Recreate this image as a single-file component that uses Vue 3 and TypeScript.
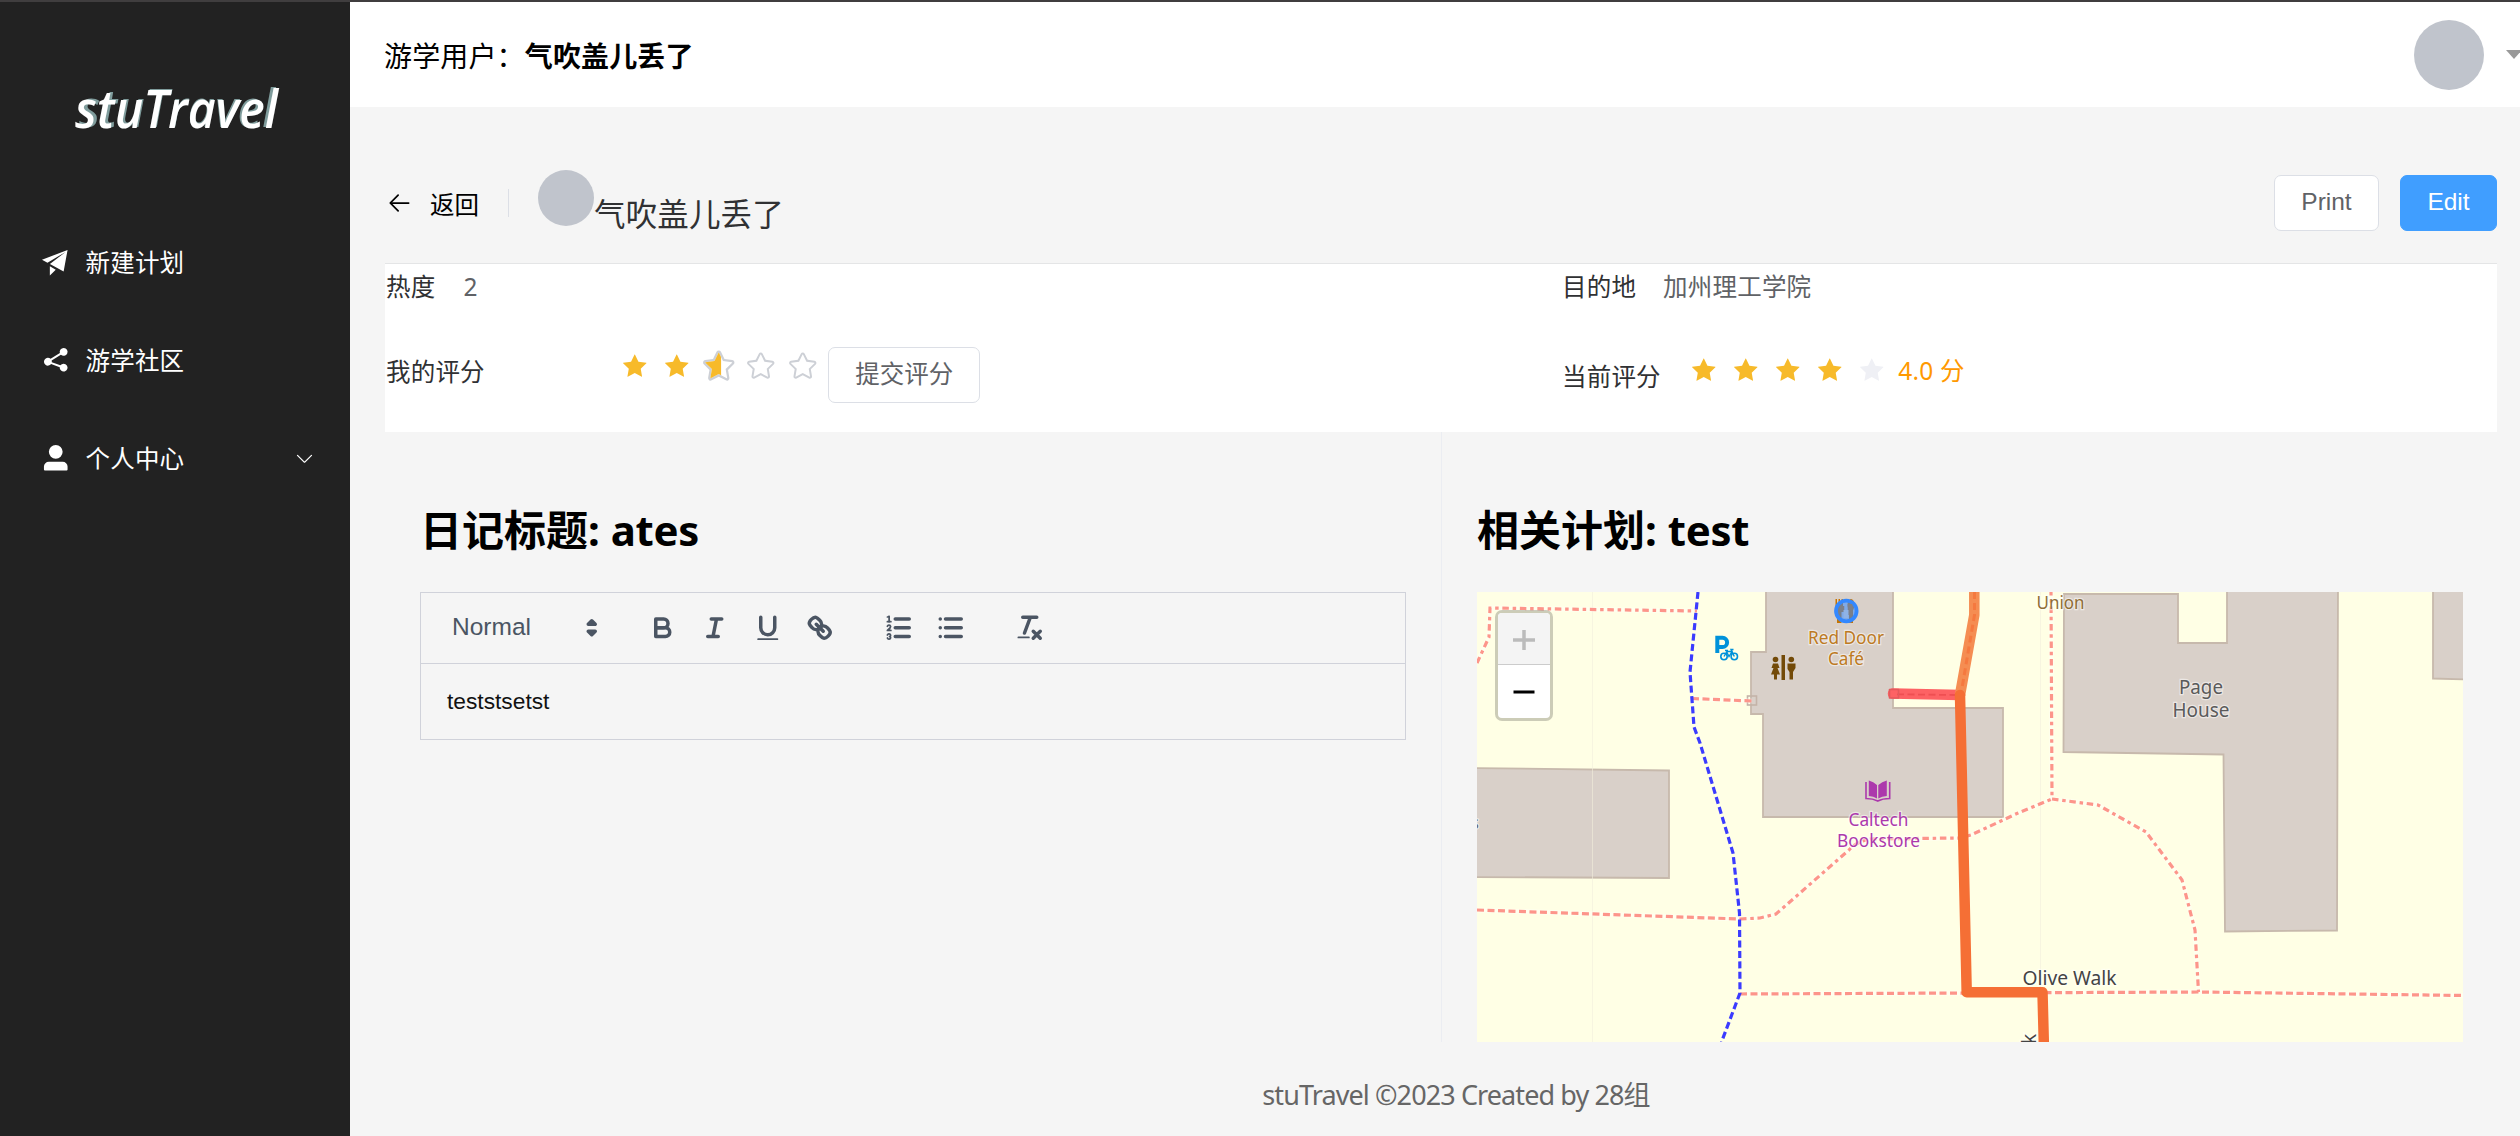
<script setup lang="ts">
interface MenuItem {
  label: string
  icon: string
  expandable?: boolean
}

const userName = '气吹盖儿丢了'

const menu: MenuItem[] = [
  {
    label: '新建计划',
    icon: 'm64 448 832-320-128 704-446.08-243.328L832 192 242.816 545.472 64 448zm256 512V657.024L512 768 320 960z',
  },
  {
    label: '游学社区',
    icon: 'm679.872 348.8-301.76 188.608a127.808 127.808 0 0 1 5.12 52.16l279.936 104.96a128 128 0 1 1-22.464 59.904l-279.872-104.96a128 128 0 1 1-16.64-166.272l301.696-188.608a128 128 0 1 1 33.92 54.272z',
  },
  {
    label: '个人中心',
    icon: 'M288 320a224 224 0 1 0 448 0 224 224 0 1 0-448 0zm544 608H160a32 32 0 0 1-32-32v-96a160 160 0 0 1 160-160h448a160 160 0 0 1 160 160v96a32 32 0 0 1-32 32z',
    expandable: true,
  },
]

const starFilled =
  'M283.84 867.84 512 747.776l228.16 119.936a6.4 6.4 0 0 0 9.28-6.72l-43.52-254.08 184.512-179.904a6.4 6.4 0 0 0-3.52-10.88l-255.104-37.12L517.76 147.904a6.4 6.4 0 0 0-11.52 0L392.192 379.072l-255.104 37.12a6.4 6.4 0 0 0-3.52 10.88L318.08 606.976l-43.584 254.08a6.4 6.4 0 0 0 9.28 6.72z'
const starOutline =
  'm512 747.84 228.16 119.936a6.4 6.4 0 0 0 9.28-6.72l-43.52-254.08 184.512-179.904a6.4 6.4 0 0 0-3.52-10.88l-255.104-37.12L517.76 147.904a6.4 6.4 0 0 0-11.52 0L392.192 379.072l-255.104 37.12a6.4 6.4 0 0 0-3.52 10.88L318.08 606.976l-43.584 254.08a6.4 6.4 0 0 0 9.28 6.72L512 747.84zM313.6 924.48a70.4 70.4 0 0 1-102.144-74.24l37.888-220.928L88.96 472.96A70.4 70.4 0 0 1 128 352.896l221.76-32.256 99.2-200.96a70.4 70.4 0 0 1 126.208 0l99.2 200.96 221.824 32.256a70.4 70.4 0 0 1 39.04 120.064L774.72 629.376l37.888 220.992a70.4 70.4 0 0 1-102.144 74.24L512 820.096l-198.4 104.32z'

type StarKind = 'full' | 'half' | 'empty'
const myStars: StarKind[] = ['full', 'full', 'half', 'empty', 'empty']
const currentScore = 4
</script>

<template>
  <div class="page">
    <aside class="sidebar">
      <div class="logo">
        <svg width="230" height="70" viewBox="0 0 230 70">
          <text x="9" y="51.5" class="logo-shade" textLength="196" lengthAdjust="spacingAndGlyphs">stuTravel</text>
          <text x="5" y="53" class="logo-text" textLength="203" lengthAdjust="spacingAndGlyphs">stuTravel</text>
        </svg>
      </div>
      <nav class="menu">
        <div v-for="item in menu" :key="item.label" class="menu-item">
          <svg class="menu-icon" viewBox="0 0 1024 1024"><path fill="#fff" :d="item.icon" /></svg>
          <span class="menu-label">{{ item.label }}</span>
          <svg v-if="item.expandable" class="menu-arrow" viewBox="0 0 1024 1024">
            <path fill="#fff" d="M831.872 340.864 512 652.672 192.128 340.864a30.592 30.592 0 0 0-42.752 0 29.12 29.12 0 0 0 0 41.6L489.664 714.24a32 32 0 0 0 44.672 0l340.288-331.712a29.12 29.12 0 0 0 0-41.728 30.592 30.592 0 0 0-42.752 0z" />
          </svg>
        </div>
      </nav>
    </aside>

    <div class="main">
      <header class="topbar">
        <div class="greeting">游学用户：<b>{{ userName }}</b></div>
        <div class="account">
          <span class="avatar big"></span>
          <span class="caret"></span>
        </div>
      </header>

      <section class="content">
        <div class="page-header">
          <svg class="back-icon" viewBox="0 0 1024 1024">
            <path d="M224 480h640a32 32 0 1 1 0 64H237.248a32 32 0 0 1 0-64z" />
            <path d="m237.248 512 265.408 265.344a32 32 0 0 1-45.312 45.312l-288-288a32 32 0 0 1 0-45.312l288-288a32 32 0 1 1 45.312 45.312L237.248 512z" />
          </svg>
          <span class="back-text">返回</span>
          <span class="sep"></span>
          <span class="avatar small"></span>
          <span class="owner">{{ userName }}</span>
          <div class="actions">
            <button class="btn print">Print</button>
            <button class="btn primary">Edit</button>
          </div>
        </div>

        <div class="info">
          <div class="info-row first">
            <div class="cell"><span class="label">热度</span><span class="value">2</span></div>
            <div class="cell"><span class="label">目的地</span><span class="value place">加州理工学院</span></div>
          </div>
          <div class="info-row second">
            <div class="cell">
              <span class="label mine">我的评分</span>
              <div class="stars my-stars">
                <svg v-for="(s, i) in myStars" :key="i" class="star" :class="s" viewBox="0 0 1024 1024">
                  <path v-if="s !== 'full'" fill="#cdd0d6" :d="starOutline" />
                  <path v-if="s === 'full'" fill="#f7ba2a" :d="starFilled" />
                  <svg v-if="s === 'half'" x="0" y="0" width="578" height="1024" viewBox="0 0 578 1024">
                    <path fill="#f7ba2a" :d="starFilled" />
                  </svg>
                </svg>
              </div>
              <button class="btn submit">提交评分</button>
            </div>
            <div class="cell">
              <span class="label current">当前评分</span>
              <div class="stars cur-stars">
                <svg v-for="n in 5" :key="n" class="star" viewBox="0 0 1024 1024">
                  <path :fill="n <= currentScore ? '#f7ba2a' : '#eff0f5'" :d="starFilled" />
                </svg>
              </div>
              <span class="score">{{ currentScore.toFixed(1) }} 分</span>
            </div>
          </div>
        </div>

        <div class="columns">
          <div class="col left">
            <h1>日记标题: <span class="title-name">ates</span></h1>
            <div class="editor">
              <div class="toolbar">
                <span class="picker">Normal</span>
                <svg class="tool updown" viewBox="0 0 18 18">
                  <polygon class="fs" points="7 11 9 13 11 11 7 11" /><polygon class="fs" points="7 7 9 5 11 7 7 7" />
                </svg>
                <svg class="tool" viewBox="0 0 18 18">
                  <path class="s" d="M5,4H9.5A2.5,2.5,0,0,1,12,6.5v0A2.5,2.5,0,0,1,9.5,9H5A0,0,0,0,1,5,9V4A0,0,0,0,1,5,4Z" />
                  <path class="s" d="M5,9h5.5A2.5,2.5,0,0,1,13,11.5v0A2.5,2.5,0,0,1,10.5,14H5a0,0,0,0,1,0,0V9A0,0,0,0,1,5,9Z" />
                </svg>
                <svg class="tool" viewBox="0 0 18 18">
                  <path class="s" d="M7,4H13M5,14H11M8,14L10,4" />
                </svg>
                <svg class="tool" viewBox="0 0 18 18">
                  <path class="s" d="M5,3V9a4.012,4.012,0,0,0,4,4H9a4.012,4.012,0,0,0,4-4V3" />
                  <rect class="f" x="3" y="15" width="12" height="1" rx=".5" />
                </svg>
                <svg class="tool" viewBox="0 0 18 18">
                  <path class="s" d="M7,7L11,11" />
                  <path class="s" d="M8.9,4.577a3.476,3.476,0,0,1,.36,4.679A3.476,3.476,0,0,1,4.577,8.9C3.185,7.5,2.035,6.4,4.217,4.217S7.5,3.185,8.9,4.577Z" />
                  <path class="s" d="M13.423,9.1a3.476,3.476,0,0,0-4.679-.36,3.476,3.476,0,0,0,.36,4.679c1.392,1.392,2.5,2.542,4.679.36S14.815,10.5,13.423,9.1Z" />
                </svg>
                <svg class="tool group" viewBox="0 0 18 18">
                  <path class="s" d="M7,4H15M7,9H15M7,14H15" />
                  <path class="s thin" d="M2.5,5.5H4.5" />
                  <path class="f" d="M3.5,6A0.5,0.5,0,0,1,3,5.5V3.085l-0.276.138A0.5,0.5,0,0,1,2.053,3c-0.124-.247-0.023-0.324.224-0.447l1-.5A0.5,0.5,0,0,1,4,2.5v3A0.5,0.5,0,0,1,3.5,6Z" />
                  <path class="s thin" d="M4.5,10.5h-2c0-.234,1.85-1.076,1.85-2.234A0.959,0.959,0,0,0,2.5,8.156" />
                  <path class="s thin" d="M2.5,14.846a0.959,0.959,0,0,0,1.85-.109A0.7,0.7,0,0,0,3.75,14a0.688,0.688,0,0,0,.6-0.736,0.959,0.959,0,0,0-1.85-.109" />
                </svg>
                <svg class="tool" viewBox="0 0 18 18">
                  <path class="s" d="M6,4H15M6,9H15M6,14H15M3,4H3.01M3,9H3.01M3,14H3.01" />
                </svg>
                <svg class="tool group" viewBox="0 0 18 18">
                  <path class="s" d="M5,3H13M6,12L9.35,3M11,11L15,15M15,11L11,15" />
                  <rect class="f" x="2" y="14" width="7" height="1" rx=".5" />
                </svg>
              </div>
              <div class="editor-body">teststsetst</div>
            </div>
          </div>

          <div class="col right">
            <h1>相关计划: <span class="title-name">test</span></h1>
            <div class="map">
              <svg width="986" height="450" viewBox="1477 592 986 450">
                <rect x="1477" y="592" width="986" height="450" fill="#ffffe5" />
                <g class="building">
                  <path d="M1766 580V652H1751V714H1763V817H2003V708H1893V580Z" />
                  <path d="M1470 768L1669 770.5V878L1470 877Z" />
                  <path d="M2064 594H2178V643H2227V580H2338L2337 930.5L2225 931.5L2223.5 754.5L2063.5 752Z" />
                  <path d="M2433 580V678.5L2470 679.5V580Z" />
                </g>
                <path d="M1592.5 592V1042M2040.5 592V1042" stroke="#f1eedc" stroke-opacity=".6" fill="none" />
                <rect x="1747.5" y="696" width="9" height="9" fill="none" stroke="#c4b3a8" stroke-width="1.6" />

                <g class="casing">
                  <path d="M1477 663L1489 637L1490 608L1697 611M2051 592L2052 799L2098 805L2146 832L2182 880L2195 930L2198.500 992" />
                  <path d="M1740 919L1760 918L1776 914L1849 850Q1856 842 1870 839L1960 838L1971 835L2018 813L2052 799" />
                  <path d="M1477 910L1740 919M1740 994L2200 992L2463 995.500M1692 698.500L1752 701" />
                </g>
                <g class="foot mixed">
                  <path d="M1477 663L1489 637L1490 608L1697 611" />
                  <path d="M2051 592L2052 799" stroke-dashoffset="3" />
                  <path d="M2052 799L2098 805L2146 832L2182 880L2195 930L2198.500 992" />
                  <path d="M1740 919L1760 918L1776 914L1849 850Q1856 842 1870 839L1960 838L1971 835L2018 813L2052 799" />
                </g>
                <g class="foot even">
                  <path d="M1477 910L1740 919" />
                  <path d="M1740 994L2200 992L2463 995.500" />
                  <path d="M1692 698.500L1752 701" />
                </g>
                <path class="cycle" d="M1698 592L1690 672L1694 727L1700 743L1733 853L1739.500 913L1740 993L1721.500 1042" />

                <!-- parking for bicycles -->
                <g stroke="#0092da" fill="none">
                  <path d="M1717.300 653V637.800H1722.500A4.600 4.600 0 0 1 1722.500 647H1717.300" stroke-width="4" />
                  <circle cx="1724" cy="656.500" r="3.200" stroke-width="1.600" />
                  <circle cx="1734.300" cy="656.500" r="3.200" stroke-width="1.600" />
                  <path d="M1724 656.500L1727 651.500H1732L1729 656.500L1726.500 651.500M1734.300 656.500L1731 649.500H1733.500M1725 650.500H1728" stroke-width="1.400" />
                </g>
                <!-- toilets -->
                <g fill="#734a08">
                  <rect x="1781.500" y="655" width="3.500" height="25" />
                  <circle cx="1775.500" cy="659.500" r="2.800" />
                  <path d="M1773 663.500H1778L1779.500 668H1777.500L1780 674.500H1777V679.500H1774V674.500H1771L1773.500 668H1771.500Z" />
                  <circle cx="1791.300" cy="659.500" r="2.800" />
                  <path d="M1787.500 663.500H1795.500V668L1793 672V679.500H1789.500V672L1787.500 669Z" />
                </g>
                <!-- café -->
                <g fill="#c77400">
                  <path d="M1835.500 599H1837V604H1838.500V599H1840V604H1841.500V599H1843V608L1841.500 611V623H1837V611L1835.500 608Z" />
                  <ellipse cx="1851" cy="605" rx="3.500" ry="6" />
                  <rect x="1849" y="609" width="4" height="14" />
                </g>
                <circle cx="1846.300" cy="611" r="10.300" fill="#3388ff" fill-opacity=".55" stroke="#3388ff" stroke-width="3.800" />
                <path d="M1842 606V612M1850 604V615" stroke="#7b808a" stroke-width="4.500" />
                <path d="M1846 610V618" stroke="#8fb3e6" stroke-width="5" />
                <!-- bookshop -->
                <g fill="#ac39ac">
                  <path d="M1868.800 780.500Q1873.500 781.500 1877 785V798.500Q1873.500 796 1868.800 796ZM1886.800 780.500Q1882 781.500 1878.300 785V798.500Q1882 796 1886.800 796Z" />
                  <path d="M1866 782V798.500Q1873 798.500 1877.800 801Q1882.500 798.500 1889.700 798.500V782" fill="none" stroke="#ac39ac" stroke-width="1.600" />
                </g>

                <g class="label-text" text-anchor="middle">
                  <g fill="#bd7a22">
                    <text x="1846" y="643.500" textLength="76" lengthAdjust="spacingAndGlyphs">Red Door</text>
                    <text x="1846" y="664.500" textLength="36" lengthAdjust="spacingAndGlyphs">Café</text>
                  </g>
                  <text x="2060.500" y="609" fill="#8f6d35" textLength="48" lengthAdjust="spacingAndGlyphs">Union</text>
                  <g fill="#ac39ac">
                    <text x="1878.500" y="825.500" textLength="60" lengthAdjust="spacingAndGlyphs">Caltech</text>
                    <text x="1878.500" y="846.500" textLength="83" lengthAdjust="spacingAndGlyphs">Bookstore</text>
                  </g>
                  <g fill="#5a5a5a" class="bigger">
                    <text x="2201" y="693.500" textLength="44" lengthAdjust="spacingAndGlyphs">Page</text>
                    <text x="2201" y="716.500" textLength="57" lengthAdjust="spacingAndGlyphs">House</text>
                  </g>
                  <text class="bigger" x="2069.500" y="985" fill="#444" textLength="94" lengthAdjust="spacingAndGlyphs">Olive Walk</text>
                </g>
                <text class="label-text bigger" fill="#444" transform="translate(2036 1044) rotate(-90)">k</text>
                <text class="label-text" fill="#666" x="1470.500" y="829">s</text>

                <g fill="none" stroke-width="10.500" stroke-linejoin="round">
                  <path d="M1893 693.500L1960 695" stroke="#fd6264" stroke-linecap="round" />
                  <path d="M1897 694.300L1955 695" stroke="#ef4f52" stroke-width="1.800" stroke-dasharray="7 3.500" />
                  <rect x="1889.500" y="689.500" width="9" height="8.500" stroke="#e35a5c" stroke-width="1.600" />
                  <path d="M1974.300 586V615L1960 695" stroke="#f58d52" />
                  <path d="M1974.500 592V615L1962 688" stroke="#f5793f" stroke-width="3" stroke-dasharray="7 4" />
                  <path d="M1960 695L1966.700 992.300H2042.500L2044 1050" stroke="#f56f35" stroke-linecap="round" />
                </g>
              </svg>
              <div class="zoom">
                <div class="zoom-cell off">
                  <svg width="22" height="22" viewBox="0 0 22 22"><path d="M0 11H22M11 1V21" stroke="#bbb" stroke-width="3.500" /></svg>
                </div>
                <div class="zoom-cell">
                  <svg width="22" height="22" viewBox="0 0 22 22"><path d="M.5 11H21.500" stroke="#000" stroke-width="3.200" /></svg>
                </div>
              </div>
            </div>
          </div>
        </div>
      </section>

      <footer class="footer"><span>stuTravel ©2023 Created by 28组</span></footer>
    </div>
  </div>
</template>

<style>
body {
  overflow: hidden;
}
</style>

<style scoped>
.page {
  box-sizing: border-box;
  display: flex;
  width: 2520px;
  height: 1136px;
  border-top: 2px solid #403e3f;
  background: #f5f5f5;
  font-family: 'Noto Sans', 'Noto Sans CJK SC', sans-serif;
  font-size: 24.5px;
  line-height: 36px;
  white-space: nowrap;
  overflow: hidden;
}
svg {
  display: block;
  flex: none;
}
.sidebar {
  width: 350px;
  flex: none;
  background: #222;
}
.logo {
  padding: 73px 0 0 70px;
  height: 138px;
}
.logo svg {
  overflow: visible;
}
.logo text {
  font-family: 'Open Sans', 'Noto Sans', sans-serif;
  font-style: italic;
  font-weight: 600;
  font-size: 52px;
}
.logo-shade {
  fill: #7f9c9c;
}
.logo-text {
  fill: #fff;
}
.menu-item {
  display: flex;
  align-items: center;
  height: 98px;
  padding: 0 35px 0 40px;
  color: #fff;
}
.menu-icon {
  width: 31.5px;
  height: 31.5px;
}
.menu-label {
  margin-left: 14px;
  padding-top: 1px;
  letter-spacing: 0.2px;
}
.menu-arrow {
  width: 21px;
  height: 21px;
  margin-left: auto;
}
.main {
  width: 2170px;
  display: flex;
  flex-direction: column;
}
.topbar {
  height: 105px;
  display: flex;
  align-items: center;
  justify-content: space-between;
  background: #fff;
  padding-left: 34px;
}
.greeting {
  font-size: 28px;
  letter-spacing: 0.15px;
  color: #000;
  padding-top: 3px;
}
.account {
  display: flex;
  align-items: center;
}
.avatar {
  flex: none;
  border-radius: 50%;
  background: #c0c4cc;
}
.big {
  width: 70px;
  height: 70px;
}
.caret {
  margin-left: 22px;
  margin-right: -2px;
  border: 8px solid transparent;
  border-top: 9px solid #999;
  border-bottom: 0;
}
.content {
  padding: 63px 23px 0 35px;
}
.page-header {
  display: flex;
  align-items: flex-start;
  height: 93px;
}
.back-icon {
  width: 28px;
  height: 28px;
  margin-top: 19px;
}
.back-text {
  width: 49px;
  color: #000;
  margin: 17px 0 0 17px;
}
.sep {
  width: 1px;
  height: 28px;
  margin: 19px 29px 0 29px;
  background: #dcdfe6;
}
.small {
  width: 56px;
  height: 56px;
}
.owner {
  font-size: 31.5px;
  letter-spacing: 0.15px;
  line-height: 40px;
  color: #303133;
  margin-top: 24px;
}
.actions {
  display: flex;
  gap: 21px;
  margin: 5px 0 0 auto;
}
.btn {
  box-sizing: border-box;
  height: 56px;
  padding: 0 0 2px;
  border: 1px solid #dcdfe6;
  border-radius: 7px;
  background: #fff;
  color: #606266;
  font: 24.5px/50px 'Liberation Sans', Arial, 'Noto Sans CJK SC', sans-serif;
}
.print {
  width: 105px;
}
.primary {
  width: 97px;
  border-color: #409eff;
  background: #409eff;
  color: #fff;
}
.info {
  box-sizing: border-box;
  height: 169px;
  border-top: 1px solid #e4e5e6;
  background: #fff;
}
.info-row {
  display: grid;
  grid-template-columns: 1176px 1fr;
}
.cell {
  display: flex;
  align-items: flex-start;
  padding-left: 1px;
}
.first {
  padding-top: 5px;
  height: 78px;
}
.label {
  color: #303133;
  letter-spacing: 0.2px;
}
.value {
  color: #606266;
  margin-left: 28px;
}
.place {
  margin-left: 27px;
  letter-spacing: 0.2px;
}
.mine {
  margin-top: 7px;
}
.current {
  margin-top: 12px;
}
.stars {
  display: flex;
  gap: 10.5px;
}
.star {
  width: 31.5px;
  height: 31.5px;
}
.half {
  transform: scale(1.15);
}
.my-stars {
  margin: 3px 0 0 134px;
}
.submit {
  width: 152px;
  margin-left: 10px;
  padding-bottom: 0;
}
.cur-stars {
  margin: 7px 0 0 27px;
}
.score {
  margin: 6px 0 0 11px;
  letter-spacing: 0.2px;
  color: #f90;
}
.columns {
  display: flex;
  height: 610px;
}
.col {
  box-sizing: border-box;
  padding: 67px 34px 0 35px;
}
.left {
  width: 1057px;
  border-right: 1px solid #ebedf2;
}
.right {
  width: 1055px;
}
h1 {
  margin: 0;
  height: 93px;
  font-size: 42px;
  line-height: 62px;
  font-weight: 700;
  color: #000;
}
.title-name {
  letter-spacing: -0.3px;
}
.editor {
  box-sizing: border-box;
  width: 986px;
  height: 148px;
  border: 1px solid #d0d2da;
}
.toolbar {
  box-sizing: border-box;
  display: flex;
  align-items: center;
  height: 71px;
  padding-left: 31px;
  border-bottom: 1px solid #d0d2da;
}
.picker {
  width: 124px;
  padding-bottom: 2px;
  font-family: 'Liberation Sans', Arial, sans-serif;
  color: #4b5563;
}
.tool {
  width: 31.5px;
  height: 31.5px;
  margin-right: 21px;
}
.updown {
  margin-right: 39px;
}
.tool.group {
  margin-left: 26px;
}
.s,
.fs {
  fill: none;
  stroke: #4b5563;
  stroke-width: 2;
  stroke-linecap: round;
  stroke-linejoin: round;
}
.fs {
  fill: #4b5563;
}
.f {
  fill: #4b5563;
}
.thin {
  stroke-width: 1;
}
.editor-body {
  padding: 19px 26px;
  font-family: 'Liberation Sans', Arial, sans-serif;
  font-size: 22.75px;
  color: #111;
}
.map {
  position: relative;
  width: 986px;
  height: 450px;
  overflow: hidden;
}
.building path {
  fill: #d9d0c9;
  stroke: #c7b9ac;
  stroke-width: 1.8;
}
.casing path {
  fill: none;
  stroke: #fff;
  stroke-opacity: 0.35;
  stroke-width: 5;
}
.foot path {
  fill: none;
  stroke: #fd958a;
  stroke-width: 3.2;
}
.mixed path {
  stroke-dasharray: 6.500 3.800 3.500 3.700;
}
.even path {
  stroke-dasharray: 7 3.500;
}
.cycle {
  fill: none;
  stroke: #3b3bff;
  stroke-width: 3.2;
  stroke-dasharray: 7 3.450;
}
.label-text {
  font-size: 17.500px;
  paint-order: stroke;
  stroke: #fff;
  stroke-opacity: 0.5;
  stroke-width: 2.500px;
}
.bigger {
  font-size: 19px;
}
.zoom {
  box-sizing: border-box;
  position: absolute;
  left: 18px;
  top: 18px;
  width: 58px;
  height: 111px;
  border: 3px solid rgba(0, 0, 0, 0.2);
  border-radius: 7px;
  background: #fff;
  background-clip: padding-box;
  overflow: hidden;
}
.zoom-cell {
  height: 53px;
  display: flex;
  align-items: center;
  justify-content: center;
}
.off {
  box-sizing: border-box;
  height: 52px;
  padding-top: 3px;
  background: #f4f4f4;
  border-bottom: 1px solid #ccc;
}
.footer {
  display: flex;
  justify-content: center;
  padding: 33px 0 0 42px;
  font-size: 27px;
  line-height: 40px;
  color: #666;
}
.footer span {
  letter-spacing: -0.9px;
}
</style>
